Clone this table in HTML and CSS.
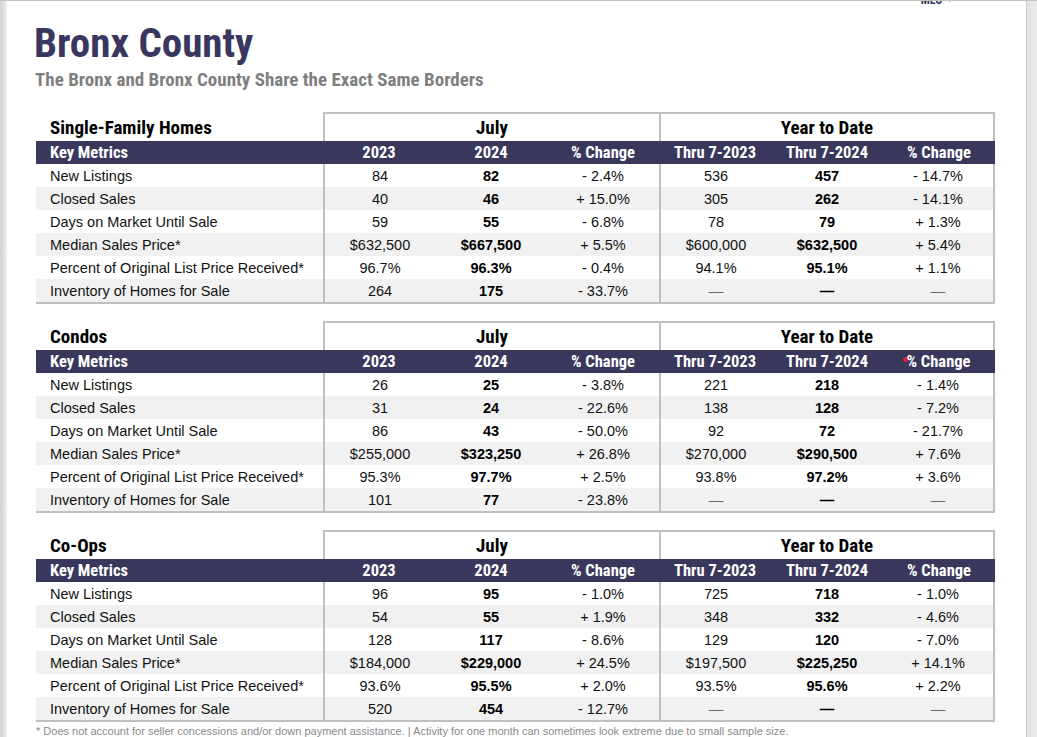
FILE: index.html
```html
<!DOCTYPE html>
<html lang="en">
<head>
<meta charset="utf-8">
<title>Bronx County</title>
<link rel="stylesheet" href="styles.css">
</head>
<body>
<div class="screen">
  <div class="edge-left"></div>
  <main class="page">
    <div class="mls"><span>MLS</span><span class="caret">▼</span></div>
    <h1 class="title">Bronx County</h1>
    <p class="subtitle">The Bronx and Bronx County Share the Exact Same Borders</p>

    <section class="tbl">
      <div class="row title-row">
        <div class="cat">Single-Family Homes</div>
        <div class="box box-july">July</div>
        <div class="box box-ytd">Year to Date</div>
      </div>
      <div class="row head">
        <div class="lbl">Key Metrics</div><div>2023</div><div>2024</div><div>% Change</div><div>Thru 7-2023</div><div>Thru 7-2024</div><div>% Change</div>
      </div>
      <div class="row body"><div class="lbl">New Listings</div><div>84</div><div class="b">82</div><div>- 2.4%</div><div>536</div><div class="b">457</div><div>- 14.7%</div></div>
      <div class="row body alt"><div class="lbl">Closed Sales</div><div>40</div><div class="b">46</div><div>+ 15.0%</div><div>305</div><div class="b">262</div><div>- 14.1%</div></div>
      <div class="row body"><div class="lbl">Days on Market Until Sale</div><div>59</div><div class="b">55</div><div>- 6.8%</div><div>78</div><div class="b">79</div><div>+ 1.3%</div></div>
      <div class="row body alt"><div class="lbl">Median Sales Price*</div><div>$632,500</div><div class="b">$667,500</div><div>+ 5.5%</div><div>$600,000</div><div class="b">$632,500</div><div>+ 5.4%</div></div>
      <div class="row body"><div class="lbl">Percent of Original List Price Received*</div><div>96.7%</div><div class="b">96.3%</div><div>- 0.4%</div><div>94.1%</div><div class="b">95.1%</div><div>+ 1.1%</div></div>
      <div class="row body alt"><div class="lbl">Inventory of Homes for Sale</div><div>264</div><div class="b">175</div><div>- 33.7%</div><div class="dash">—</div><div class="b">—</div><div class="dash">—</div></div>
    </section>

    <section class="tbl">
      <div class="row title-row">
        <div class="cat">Condos</div>
        <div class="box box-july">July</div>
        <div class="box box-ytd">Year to Date</div>
      </div>
      <div class="row head">
        <div class="lbl">Key Metrics</div><div>2023</div><div>2024</div><div>% Change</div><div>Thru 7-2023</div><div>Thru 7-2024</div><div><span class="dot"></span>% Change</div>
      </div>
      <div class="row body"><div class="lbl">New Listings</div><div>26</div><div class="b">25</div><div>- 3.8%</div><div>221</div><div class="b">218</div><div>- 1.4%</div></div>
      <div class="row body alt"><div class="lbl">Closed Sales</div><div>31</div><div class="b">24</div><div>- 22.6%</div><div>138</div><div class="b">128</div><div>- 7.2%</div></div>
      <div class="row body"><div class="lbl">Days on Market Until Sale</div><div>86</div><div class="b">43</div><div>- 50.0%</div><div>92</div><div class="b">72</div><div>- 21.7%</div></div>
      <div class="row body alt"><div class="lbl">Median Sales Price*</div><div>$255,000</div><div class="b">$323,250</div><div>+ 26.8%</div><div>$270,000</div><div class="b">$290,500</div><div>+ 7.6%</div></div>
      <div class="row body"><div class="lbl">Percent of Original List Price Received*</div><div>95.3%</div><div class="b">97.7%</div><div>+ 2.5%</div><div>93.8%</div><div class="b">97.2%</div><div>+ 3.6%</div></div>
      <div class="row body alt"><div class="lbl">Inventory of Homes for Sale</div><div>101</div><div class="b">77</div><div>- 23.8%</div><div class="dash">—</div><div class="b">—</div><div class="dash">—</div></div>
    </section>

    <section class="tbl">
      <div class="row title-row">
        <div class="cat">Co-Ops</div>
        <div class="box box-july">July</div>
        <div class="box box-ytd">Year to Date</div>
      </div>
      <div class="row head">
        <div class="lbl">Key Metrics</div><div>2023</div><div>2024</div><div>% Change</div><div>Thru 7-2023</div><div>Thru 7-2024</div><div>% Change</div>
      </div>
      <div class="row body"><div class="lbl">New Listings</div><div>96</div><div class="b">95</div><div>- 1.0%</div><div>725</div><div class="b">718</div><div>- 1.0%</div></div>
      <div class="row body alt"><div class="lbl">Closed Sales</div><div>54</div><div class="b">55</div><div>+ 1.9%</div><div>348</div><div class="b">332</div><div>- 4.6%</div></div>
      <div class="row body"><div class="lbl">Days on Market Until Sale</div><div>128</div><div class="b">117</div><div>- 8.6%</div><div>129</div><div class="b">120</div><div>- 7.0%</div></div>
      <div class="row body alt"><div class="lbl">Median Sales Price*</div><div>$184,000</div><div class="b">$229,000</div><div>+ 24.5%</div><div>$197,500</div><div class="b">$225,250</div><div>+ 14.1%</div></div>
      <div class="row body"><div class="lbl">Percent of Original List Price Received*</div><div>93.6%</div><div class="b">95.5%</div><div>+ 2.0%</div><div>93.5%</div><div class="b">95.6%</div><div>+ 2.2%</div></div>
      <div class="row body alt"><div class="lbl">Inventory of Homes for Sale</div><div>520</div><div class="b">454</div><div>- 12.7%</div><div class="dash">—</div><div class="b">—</div><div class="dash">—</div></div>
    </section>

    <p class="note">* Does not account for seller concessions and/or down payment assistance. | Activity for one month can sometimes look extreme due to small sample size.</p>
  </main>
  <div class="edge-right"></div>
</div>
</body>
</html>
```

FILE: styles.css
```css
* { box-sizing: border-box; }

html, body {
  margin: 0;
  padding: 0;
  height: 100%;
  overflow: hidden;
  background: #ffffff;
}

.screen {
  display: flex;
  height: 737px;
  border-top: 1px solid #c4c4c4;
}

.edge-left {
  width: 7px;
  flex: none;
  background: linear-gradient(to right, #d2d2d2, #e6e6e6 70%, #f0f0f0);
}

.edge-right {
  width: 11px;
  flex: none;
  border-left: 1px solid #cfcfcf;
  background: linear-gradient(to right, #e2e2e2, #ececec);
}

.page {
  flex: 1;
  padding: 0 0 0 28px;
  overflow: hidden;
  font-family: "Liberation Sans", Arial, sans-serif;
  color: #111;
}

.mls,
.title,
.subtitle,
.title-row,
.head {
  font-family: "Roboto Condensed", "Open Sans Condensed", "Liberation Sans Narrow", "Open Sans", sans-serif;
  font-stretch: 75%;
}

.mls {
  height: 0;
  display: flex;
  justify-content: flex-end;
  gap: 4px;
  padding-right: 72px;
  margin-top: -7px;
  font-weight: bold;
  font-size: 12px;
  line-height: 12px;
  color: #3a375c;
}

.mls .caret { font-size: 8px; }

.title {
  margin: 29px 0 0 -1px;
  font-weight: bold;
  font-size: 41px;
  line-height: 41px;
  color: #393660;
  letter-spacing: 0;
}

.subtitle {
  margin: 6px 0 0 0;
  font-weight: bold;
  font-size: 19px;
  line-height: 19px;
  color: #7f7f7f;
}

.tbl {
  margin: 23px 0 0 1px;
  width: 959px;
  border-bottom: 2px solid #c0c0c0;
}

.tbl + .tbl { margin-top: 17px; }

.row {
  display: grid;
  grid-template-columns: 287px repeat(6, 112px);
}

.title-row {
  height: 29px;
  font-weight: bold;
  font-size: 19px;
  color: #000;
}

.title-row .cat {
  padding: 2px 0 0 14px;
  line-height: 27px;
}

.box {
  border-top: 2px solid #c0c0c0;
  border-left: 2px solid #c0c0c0;
  text-align: center;
  line-height: 27px;
}

.box-july { grid-column: 2 / 5; }
.box-ytd { grid-column: 5 / 8; border-right: 2px solid #c0c0c0; }

.head {
  height: 23px;
  background: #3a375c;
  color: #fff;
  font-weight: bold;
  font-size: 16.5px;
  line-height: 23px;
  text-align: center;
}

.head .lbl { text-align: left; padding-left: 14px; }

.body {
  height: 23px;
  font-size: 14.5px;
  line-height: 23px;
  text-align: center;
  color: #111;
}

.body > div { padding-top: 1px; }

.body.alt { background: #f1f1f1; }

.body .lbl { text-align: left; padding-left: 14px; }

.body > div:nth-child(2),
.body > div:nth-child(5) { border-left: 2px solid #c0c0c0; }
.body > div:nth-child(7) { border-right: 2px solid #c0c0c0; }

.b { font-weight: bold; color: #000; }
.dash { color: #666; }

.dot {
  display: inline-block;
  width: 5px;
  height: 5px;
  border-radius: 50%;
  background: #e3202b;
  margin: 0 -1px 6px -5px;
  vertical-align: middle;
}

.note {
  margin: 3px 0 0 1px;
  font-size: 11px;
  line-height: 13px;
  color: #8a8a8a;
  white-space: nowrap;
}
```
